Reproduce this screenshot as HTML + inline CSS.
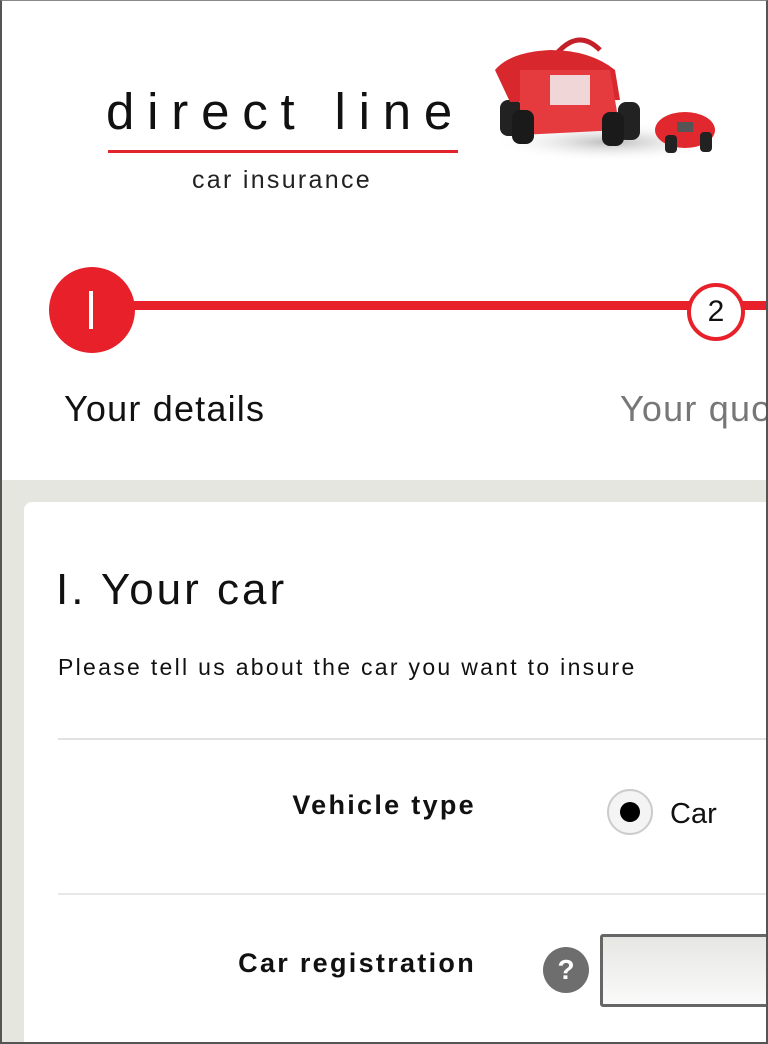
<!DOCTYPE html>
<html><head><style>
*{margin:0;padding:0;box-sizing:border-box}
html,body{width:768px;height:1044px;overflow:hidden;background:#fff}
body{position:relative;font-family:"Liberation Sans",sans-serif;color:#111}
.frame{position:absolute;left:0;top:0;width:768px;height:1044px;border:2px solid #555;border-top:1px solid #888;pointer-events:none;z-index:10}
.abs{position:absolute;white-space:nowrap}
</style></head><body>
<div class="abs" style="left:106px;top:82px;font-size:51px;letter-spacing:12.8px;color:#111;line-height:60px">direct line</div>
<div class="abs" style="left:108px;top:150px;width:350px;height:3px;background:#e2242c"></div>
<div class="abs" style="left:192px;top:164px;font-size:25px;letter-spacing:2.3px;color:#222;line-height:32px">car insurance</div>
<svg class="abs" style="left:490px;top:30px" width="250" height="140" viewBox="0 0 250 140">
<defs><radialGradient id="sh" cx="50%" cy="50%" r="50%"><stop offset="0" stop-color="#bbb"/><stop offset="1" stop-color="#fff" stop-opacity="0"/></radialGradient></defs>
<ellipse cx="120" cy="112" rx="120" ry="20" fill="url(#sh)"/>
<path d="M50 50 Q80 -10 110 20" stroke="#c4202a" stroke-width="5" fill="none"/>
<rect x="10" y="70" width="22" height="36" rx="8" fill="#222"/>
<rect x="128" y="72" width="22" height="38" rx="8" fill="#222"/>
<path d="M5 40 Q20 22 60 20 Q100 20 125 40 L130 70 L20 72 Z" fill="#d8282e"/>
<path d="M30 40 L120 40 L130 100 L30 105 Z" fill="#e53a3e"/>
<rect x="60" y="45" width="40" height="30" fill="#f2f2f2" opacity=".85"/>
<rect x="22" y="80" width="22" height="34" rx="8" fill="#1a1a1a"/>
<rect x="112" y="82" width="22" height="34" rx="8" fill="#1a1a1a"/>
<ellipse cx="195" cy="100" rx="30" ry="18" fill="#e0282e"/>
<rect x="175" y="105" width="12" height="18" rx="4" fill="#222"/>
<rect x="210" y="102" width="12" height="20" rx="4" fill="#222"/>
<rect x="187" y="92" width="16" height="10" fill="#555"/>
</svg>
<div class="abs" style="left:130px;top:301px;width:638px;height:9px;background:#e8202a"></div>
<div class="abs" style="left:49px;top:267px;width:86px;height:86px;border-radius:50%;background:#e8202a"></div>
<div class="abs" style="left:89px;top:291px;width:4px;height:38px;background:#fff"></div>
<div class="abs" style="left:687px;top:283px;width:58px;height:58px;border-radius:50%;background:#fff;border:4px solid #e8202a;font-size:30px;line-height:50px;text-align:center;color:#111">2</div>
<div class="abs" style="left:64px;top:386px;font-size:36px;letter-spacing:1.2px;line-height:46px;color:#111">Your details</div>
<div class="abs" style="left:620px;top:386px;font-size:36px;letter-spacing:1.2px;line-height:46px;color:#777">Your quo</div>
<div class="abs" style="left:0;top:480px;width:768px;height:564px;background:#e6e6e1"></div>
<div class="abs" style="left:24px;top:502px;width:760px;height:560px;background:#fff;border-radius:8px"></div>
<div class="abs" style="left:56px;top:562px;font-size:44px;letter-spacing:3px;line-height:56px;color:#111">I. Your car</div>
<div class="abs" style="left:58px;top:652px;font-size:23px;letter-spacing:2.3px;line-height:30px;color:#111">Please tell us about the car you want to insure</div>
<div class="abs" style="left:58px;top:738px;width:710px;height:2px;background:#e2e2e2"></div>
<div class="abs" style="left:0;width:476px;top:788px;text-align:right;font-size:27px;letter-spacing:2.3px;font-weight:bold;line-height:34px">Vehicle type</div>
<div class="abs" style="left:607px;top:789px;width:46px;height:46px;border-radius:50%;background:#f4f4f4;border:2px solid #ccc"></div>
<div class="abs" style="left:620px;top:802px;width:20px;height:20px;border-radius:50%;background:#000"></div>
<div class="abs" style="left:670px;top:796px;font-size:29px;line-height:36px">Car</div>
<div class="abs" style="left:58px;top:893px;width:710px;height:2px;background:#e8e8e8"></div>
<div class="abs" style="left:0;width:476px;top:946px;text-align:right;font-size:27px;letter-spacing:2.3px;font-weight:bold;line-height:34px">Car registration</div>
<div class="abs" style="left:543px;top:947px;width:46px;height:46px;border-radius:50%;background:#6e6e6e;color:#fff;font-size:28px;font-weight:bold;line-height:46px;text-align:center">?</div>
<div class="abs" style="left:600px;top:934px;width:180px;height:73px;border:3px solid #666;border-radius:3px;background:linear-gradient(#e6e6e3,#fafafa)"></div>
<div class="frame"></div>
</body></html>
